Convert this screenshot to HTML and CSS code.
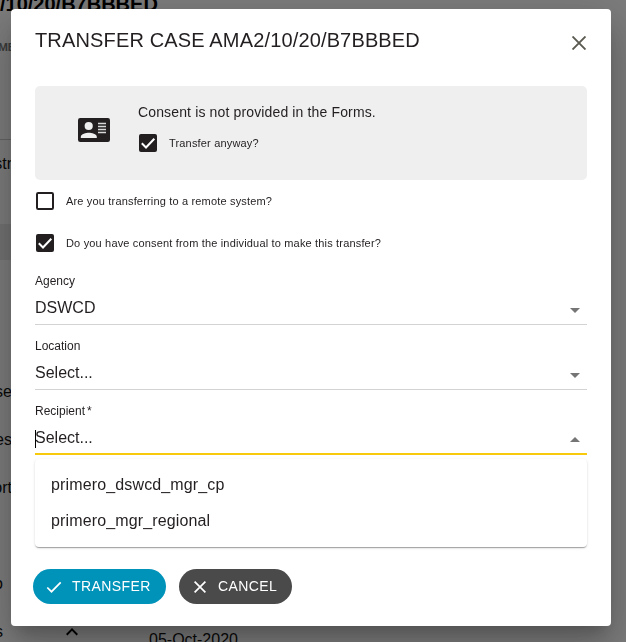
FILE: index.html
```html
<!DOCTYPE html>
<html lang="en">
<head>
<meta charset="utf-8">
<title>Transfer case</title>
<link rel="stylesheet" href="styles.css">
</head>
<body>
<div class="page" aria-hidden="true">
  <div class="page-title">/10/20/B7BBBED</div>
  <div class="page-meta"><span>ME</span></div>
  <div class="nav-row first"><span>str</span></div>
  <div class="nav-row selected"></div>
  <div class="nav-space"></div>
  <div class="nav-row"><span>se</span></div>
  <div class="nav-row"><span>es</span></div>
  <div class="nav-row"><span>ort</span></div>
  <div class="nav-row"></div>
  <div class="nav-row short"><span>o</span></div>
  <div class="nav-row last"><span>s</span>
    <svg class="chevron" viewBox="0 0 24 24"><path d="M12 8l-6 6 1.410 1.410L12 10.830l4.590 4.580L18 14z"/></svg>
    <b class="date">05-Oct-2020</b>
  </div>
</div>
<div class="backdrop">
  <div class="dialog" role="dialog">
    <header class="dialog-head">
      <h1>TRANSFER CASE AMA2/10/20/B7BBBED</h1>
      <svg class="close" viewBox="0 0 14 14"><path d="M.5.5l13 13M13.500.5L.5 13.500"/></svg>
    </header>
    <section class="consent">
      <svg class="card-icon" viewBox="0 0 32 24"><rect width="32" height="24" rx="2.200"/><g class="cut"><circle cx="10.700" cy="8" r="4.100"/><path d="M2.800 20v-1.300c0-2.600 5.300-4 8-4s8 1.400 8 4V20z"/></g><path class="lines" d="M20 5.500h8M20 8.500h8M20 11.500h8M20 14.500h8"/></svg>
      <div class="consent-body">
        <p>Consent is not provided in the Forms.</p>
        <label class="check anyway"><svg class="box" viewBox="0 0 18 18"><rect width="18" height="18" rx="2"/><path class="tick" d="M2.800 9.300L7 13.500 15.300 4.800"/></svg><span>Transfer anyway?</span></label>
      </div>
    </section>
    <label class="check remote"><svg class="box" viewBox="0 0 18 18"><rect class="empty" x="1" y="1" width="16" height="16" rx="1.200"/></svg><span>Are you transferring to a remote system?</span></label>
    <label class="check individual"><svg class="box" viewBox="0 0 18 18"><rect width="18" height="18" rx="2"/><path class="tick" d="M2.800 9.300L7 13.500 15.300 4.800"/></svg><span>Do you have consent from the individual to make this transfer?</span></label>
    <div class="field"><div class="label">Agency</div><div class="value"><span>DSWCD</span><svg viewBox="0 0 10 5"><path d="M0 0h10L5 5z"/></svg></div></div>
    <div class="field"><div class="label">Location</div><div class="value"><span>Select...</span><svg viewBox="0 0 10 5"><path d="M0 0h10L5 5z"/></svg></div></div>
    <div class="field focused"><div class="label">Recipient<span class="star">*</span></div><div class="value"><i class="caret"></i><span>Select...</span><svg viewBox="0 0 10 5"><path d="M0 5h10L5 0z"/></svg></div></div>
    <div class="menu">
      <div class="option">primero_dswcd_mgr_cp</div>
      <div class="option">primero_mgr_regional</div>
    </div>
    <footer class="actions">
      <div class="button primary"><svg viewBox="0 0 16 14"><path d="M1.300 7.500l4.200 4.200L14.700 2.400"/></svg><span>TRANSFER</span></div>
      <div class="button cancel"><svg viewBox="0 0 12 12"><path d="M.6.6l10.800 10.800M11.400.6L.6 11.400"/></svg><span>CANCEL</span></div>
    </footer>
  </div>
</div>
</body>
</html>
```
FILE: styles.css
```css
* { box-sizing: border-box; }
body {
  margin: 0;
  height: 642px;
  overflow: hidden;
  font-family: "Liberation Sans", Arial, sans-serif;
  color: #231f20;
  background: #fff;
}
.page { height: 642px; overflow: hidden; background: #f8f8f8; color: #111; }
.page-title { height: 30px; margin-top: -12px; line-height: 33px; font-size: 20px; font-weight: 700; color: #000; white-space: nowrap; }
.page-meta { width: 120px; height: 122px; padding-top: 23px; border-bottom: 1px solid #c8c8c8; font: 700 11px/14px Roboto, sans-serif; color: #777; }
.page-meta span, .nav-row span { display: flex; justify-content: flex-end; width: 12px; flex: none; }
.page-meta span { width: 14px; }
.nav-row { display: flex; align-items: center; height: 48px; font-size: 16px; }
.nav-row.first { height: 48px; margin-bottom: 36px; }
.nav-row.selected { width: 120px; height: 36px; background: #e4e4e4; }
.nav-space { height: 108px; }
.nav-row.short span { width: 3px; }
.nav-row.last span { width: 3px; }
.chevron { width: 24px; height: 24px; margin-left: 57px; fill: #000; }
.date { margin: 16px 0 0 65px; font-size: 16px; font-weight: 400; }
.backdrop { position: fixed; inset: 0; background: rgba(0, 0, 0, .5); }
.dialog {
  width: 600px;
  height: 617px;
  margin: 9px 0 0 11px;
  padding: 0 24px;
  border-radius: 4px;
  background: #fff;
  box-shadow: 0 11px 15px -7px rgba(0,0,0,.2), 0 24px 38px 3px rgba(0,0,0,.14), 0 9px 46px 8px rgba(0,0,0,.12);
}
.dialog-head { display: flex; justify-content: space-between; height: 77px; padding-top: 18px; }
h1 { margin: 0; font-size: 20px; line-height: 26px; font-weight: 400; letter-spacing: .15px; white-space: nowrap; }
.close { width: 14px; height: 14px; margin: 9px 1px 0 0; fill: none; stroke: #5a5a50; stroke-width: 1.9; }
.consent { display: flex; height: 94px; padding: 17px 0 0 43px; border-radius: 5px; background: #efefef; }
.card-icon { width: 32px; height: 24px; margin: 15px 28px 0 0; fill: #231f20; }
.card-icon .cut { fill: #efefef; }
.card-icon .lines { stroke: #d8d8d8; stroke-width: 1.5; }
p { margin: 0 0 13px; font-size: 14px; line-height: 18px; letter-spacing: .14px; }
.check { display: flex; align-items: center; height: 18px; font-size: 11px; white-space: nowrap; letter-spacing: .17px; }
.box { width: 18px; height: 18px; margin-right: 12px; fill: #231f20; }
.anyway { margin-left: 1px; }
.empty { fill: #fff; stroke: #231f20; stroke-width: 2; }
.tick { fill: none; stroke: #fff; stroke-width: 2; }
.remote { margin: 12px 0 24px 1px; }
.individual { margin-left: 1px; }
.individual + .field { margin-top: 21px; }
.label { height: 17px; font-size: 12px; line-height: 17px; }
.star { margin-left: 2px; }
.value { display: flex; align-items: center; height: 28px; margin-top: 5px; padding-right: 7px; font-size: 16px; }
.field { height: 52px; margin-bottom: 13px; border-bottom: 1px solid #d3d3d3; }
.value svg { width: 10px; height: 5px; margin: 3px 0 0 auto; fill: #757575; }
.value span { margin-bottom: 2px; }
.focused { height: 52px; border-bottom: 2px solid #f7ca0b; margin-bottom: 4px; }
.focused .value svg { margin-top: 1px; }
.caret { width: 1px; height: 18px; margin-right: -1px; background: #000; }
.menu { height: 88px; padding: 8px 16px; border-radius: 4px; background: #fff; box-shadow: 0 2px 1px -1px rgba(0,0,0,.2), 0 1px 1px rgba(0,0,0,.14), 0 1px 3px rgba(0,0,0,.12); }
.option { height: 36px; font-size: 16px; line-height: 35px; letter-spacing: .14px; }
.actions { display: flex; gap: 13px; margin: 22px 0 0 -2px; }
.button { display: flex; align-items: center; height: 35px; padding-left: 14px; border-radius: 18px; color: #fff; font-size: 14px; letter-spacing: .4px; white-space: nowrap; }
.button svg { fill: none; stroke: #fff; stroke-width: 1.700; flex: none; }
.button span { margin-bottom: 1px; }
.primary { width: 133px; background: #0093ba; }
.primary svg { width: 16px; height: 14px; margin: 0 9px 0 -1px; }
.primary span { margin-left: 1px; }
.cancel { width: 113px; padding-left: 15px; background: #4a4a4a; }
.cancel svg { width: 12px; height: 12px; margin-right: 12px; }
```
